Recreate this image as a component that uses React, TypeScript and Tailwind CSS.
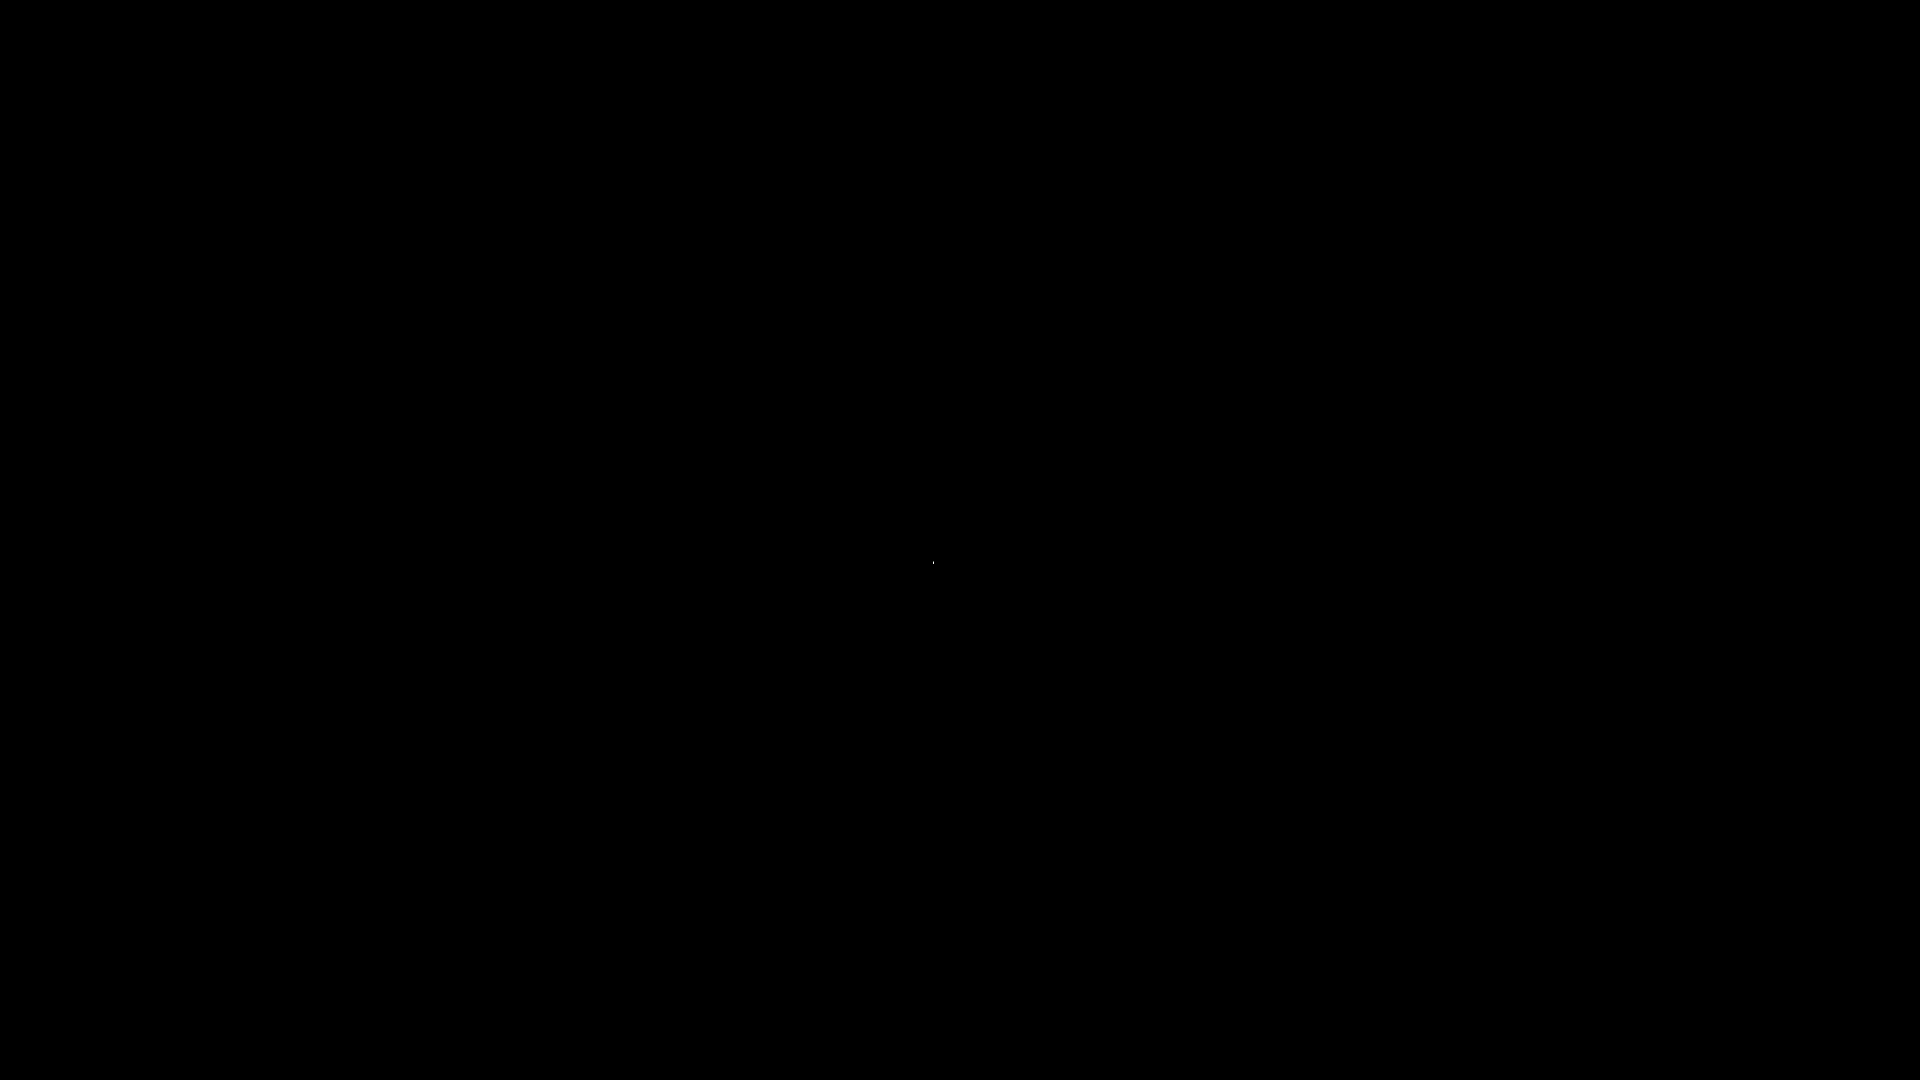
import React from 'react';

export default function App() {
  return (
    <div className="w-[1920px] h-[1080px] bg-black overflow-hidden pl-[933px] pt-[561px]">
      {/* tiny light speck in the middle of the dark screen */}
      <div className="flex flex-col w-px">
        <div className="h-px bg-[#6e7a6e]" />
        <div className="h-px bg-[#ffffff]" />
        <div className="h-px bg-[#ececec]" />
      </div>
    </div>
  );
}
